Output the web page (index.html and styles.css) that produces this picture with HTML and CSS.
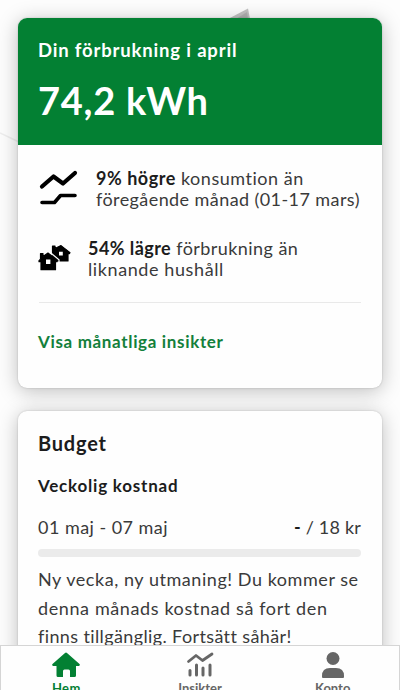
FILE: index.html
```html
<!DOCTYPE html>
<html lang="sv">
<head>
<meta charset="utf-8">
<title>Hem</title>
<link rel="stylesheet" href="styles.css">
</head>
<body>
<div class="screen">
  <svg class="backdrop" viewBox="0 0 400 160" aria-hidden="true">
    <path d="M228 19L248 8.500L250 19Z" fill="#c2c2c2"/>
    <path d="M236 19L247 12L248 19Z" fill="#b0b0b0"/>
    <path d="M0 133L19 142" stroke="#eee" stroke-width="1.500"/>
  </svg>
  <main class="cards">
    <section class="card usage">
      <header class="usage-head">
        <h2 class="usage-title">Din förbrukning i april</h2>
        <p class="usage-value">74,2 kWh</p>
      </header>
      <div class="usage-body">
        <div class="fact fact-trend">
          <svg class="trend-icon" viewBox="0 0 40 38" fill="none" stroke="#000" stroke-linejoin="round" stroke-linecap="round"><path d="M3 18.500L14.500 8.500L24 15.500L36 5" stroke-width="4.200"/><path d="M3 34.500H15.500L21.500 27.500H36" stroke-width="3.600"/></svg>
          <p class="fact-text"><span class="line l1"><b>9% högre</b> konsumtion än</span><span class="line l2">föregående månad (01-17 mars)</span></p>
        </div>
        <div class="fact fact-homes">
          <svg class="homes-icon" viewBox="0 0 34 28"><g stroke="#000" stroke-linejoin="round" stroke-width="1.200"><path d="M13.500 1h2.500v2.500L22 .6l9 7-.5 1H29V16h-9.500l-6-6z"/><path d="M1.500 8.500H4v3l5-3.500 9.500 7.500-.5 1.200h-1.500v8H2v-8H0v-1l1.500-1.500z"/></g><path d="M9.500 6L20 14.800V17" fill="none" stroke="#fefefe" stroke-width="1.200"/><path d="M7 14.500h4.400v4.400H7zM20 6.800h3.800v3.800H20z" fill="#fefefe"/></svg>
          <p class="fact-text"><span class="line l3"><b>54% lägre</b> förbrukning än</span><span class="line l4">liknande hushåll</span></p>
        </div>
        <hr class="rule">
        <a class="link">Visa månatliga insikter</a>
      </div>
    </section>
    <section class="card budget">
      <h2 class="budget-title">Budget</h2>
      <h3 class="budget-sub">Veckolig kostnad</h3>
      <div class="budget-row"><span class="period">01 maj - 07 maj</span><span class="amount"><b>-</b> / 18 kr</span></div>
      <div class="meter"></div>
      <p class="note"><span class="line n1">Ny vecka, ny utmaning! Du kommer se</span><span class="line n2">denna månads kostnad så fort den</span><span class="line n3">finns tillgänglig. Fortsätt såhär!</span></p>
    </section>
  </main>
  <nav class="tabs">
    <a class="tab active"><svg viewBox="0 0 28 26" fill="currentColor"><path d="M13 1q1-.8 2 0l12.500 11q1 1.500-.7 2H24v9.500q0 1.500-1.500 1.500H18v-6q0-1.500-1.500-1.500h-4Q11 17.500 11 19v6H6q-1.500 0-1.500-1.500V14H1.200q-1.700-.5-.7-2z"/></svg><span>Hem</span></a>
    <a class="tab"><svg viewBox="0 0 28 26" fill="none" stroke="currentColor" stroke-width="3" stroke-linecap="round" stroke-linejoin="round"><path d="M2.500 9.500L10 3.500L16.500 8.500L26 2" stroke-width="2.800"/><path d="M4 18.500v4.500M10.500 13v10M17 16v7M24 13v10"/></svg><span>Insikter</span></a>
    <a class="tab"><svg viewBox="0 0 28 26" fill="currentColor"><circle cx="14" cy="6.500" r="6.500"/><path d="M3 25v-1q0-8 8-8h6q8 0 8 8v1q0 1-1 1H4q-1 0-1-1z"/></svg><span>Konto</span></a>
  </nav>
</div>
</body>
</html>
```
FILE: styles.css
```css
* { box-sizing: border-box; margin: 0; padding: 0; }
body { font-family: Lato, sans-serif; color: #3a3a3a; background: #fdfdfd; }
b, h2, h3 { color: #1c1c1c; }
.screen { position: relative; width: 400px; height: 690px; overflow: hidden; background: #fdfdfd; }
.backdrop { position: absolute; top: 0; left: 0; width: 400px; height: 160px; }
.cards { position: relative; display: flex; flex-direction: column; gap: 23px; padding: 18px 18px 0; }
.card { background: #fefefe; border-radius: 9px; box-shadow: 0 0 2px rgba(0,0,0,.2), 0 3px 20px rgba(0,0,0,.26); }
.line { display: block; white-space: nowrap; }
.usage { height: 370px; overflow: hidden; }
.usage-head { height: 127px; padding: 19px 20px; color: #fff; background: #038033; }
.usage-title { color: #fff; font-size: 18.500px; line-height: 26px; letter-spacing: .83px; white-space: nowrap; }
.usage-value { margin-top: 14px; font-size: 38px; line-height: 46px; font-weight: 700; letter-spacing: .75px; }
.usage-body { padding: 23px 21px; }
.fact { display: flex; font-size: 18px; line-height: 21px; }
.trend-icon { width: 40px; height: 38px; margin-right: 17px; flex: none; }
.homes-icon { width: 34px; height: 28px; margin: 7px 15px 0 0; flex: none; overflow: visible; }
.l1 { letter-spacing: .53px; }
.l2 { letter-spacing: .42px; }
.l3 { letter-spacing: .44px; }
.l4 { letter-spacing: .6px; }
.fact-homes { margin-top: 28px; }
.rule { border: 0; border-top: 1px solid #e9e9e9; margin: 22px 0 28px; }
.link { display: block; margin-left: -1px; color: #13803b; font-size: 17px; line-height: 22px; font-weight: 700; letter-spacing: .66px; }
.budget { height: 320px; padding: 19px 21px; }
.budget-title { margin-left: -1px; font-size: 20px; line-height: 26px; letter-spacing: .8px; }
.budget-sub { margin: 18px 0 0 -1px; font-size: 17px; line-height: 24px; letter-spacing: .78px; }
.budget-row { display: flex; justify-content: space-between; margin-top: 17px; font-size: 18px; line-height: 24px; }
.period { margin-left: -1px; letter-spacing: .47px; }
.amount { letter-spacing: .2px; }
.meter { height: 8px; margin: 10px 0 0 -1px; border-radius: 4px; background: #ebebeb; }
.note { margin: 8px 0 0 -1px; font-size: 18px; line-height: 28.500px; }
.n1 { letter-spacing: .55px; }
.n2 { letter-spacing: .61px; }
.n3 { letter-spacing: .38px; }
.tabs { position: absolute; left: 0; right: 0; bottom: 0; height: 45px; display: grid; grid-template-columns: repeat(3, 1fr); border: 1px solid #d5d5d5; border-bottom: 0; background: #fefefe; }
.tab { display: flex; flex-direction: column; align-items: center; padding-top: 6px; color: #666; font-size: 13px; line-height: 18px; font-weight: 700; }
.tab svg { width: 28px; height: 26px; margin-bottom: 1px; flex: none; }
.tab:first-child { padding-right: 2px; }
.active { color: #038033; }
.active span { letter-spacing: .4px; }
```
